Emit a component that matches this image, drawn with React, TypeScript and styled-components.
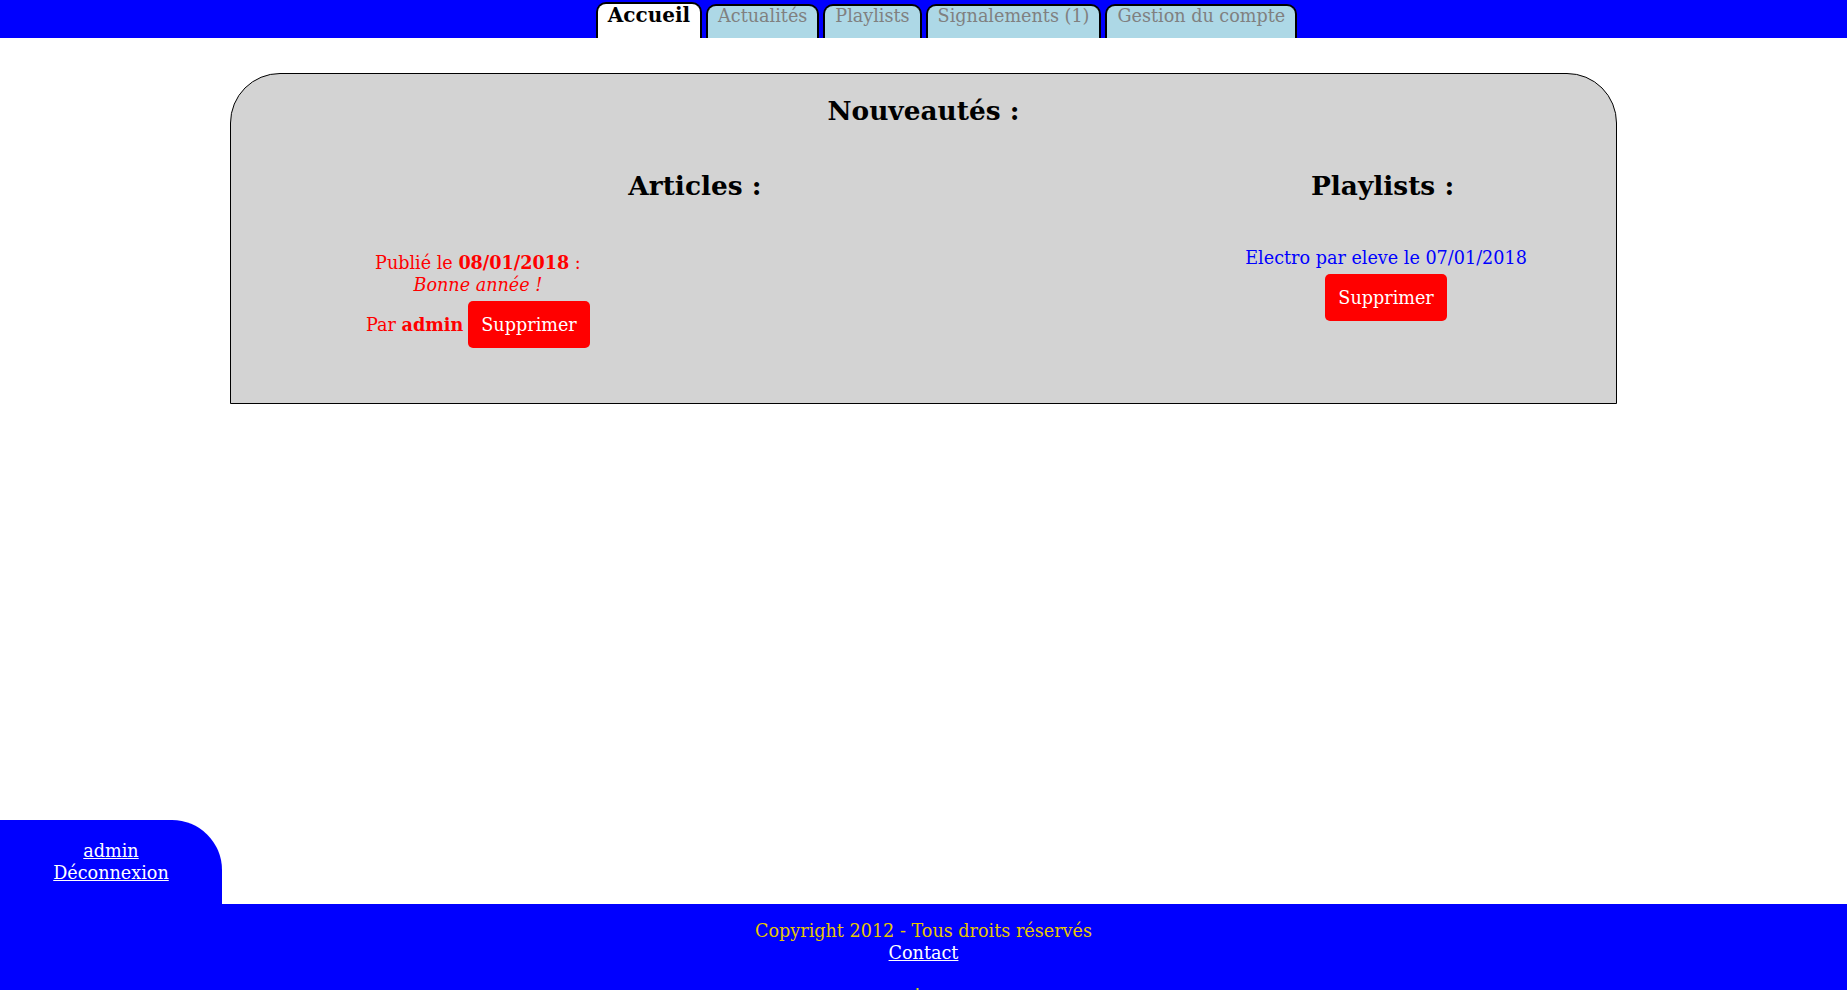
import React from "react";
import styled, { createGlobalStyle } from "styled-components";

const GlobalStyle = createGlobalStyle`
  html, body {
    margin: 0;
    padding: 0;
    background: #ffffff;
  }
  body {
    font-family: "DejaVu Serif", serif;
    font-size: 17.6px;
    color: #000000;
  }
`;

const Header = styled.nav`
  height: 38px;
  background: #0000ff;
  display: flex;
  justify-content: center;
  align-items: flex-end;
  gap: 4px;
  padding-left: 46px;
`;

const Tab = styled.a<{ $active?: boolean }>`
  box-sizing: border-box;
  display: block;
  height: ${(p) => (p.$active ? "36px" : "34px")};
  padding: 0 10px;
  border: 2px solid #000000;
  border-bottom: 0;
  border-radius: 10px 10px 0 0;
  background: ${(p) => (p.$active ? "#ffffff" : "#add8e6")};
  color: ${(p) => (p.$active ? "#000000" : "#808080")};
  font-weight: ${(p) => (p.$active ? "bold" : "normal")};
  font-size: ${(p) => (p.$active ? "20px" : "17.6px")};
  line-height: ${(p) => (p.$active ? "23px" : "20px")};
  text-decoration: none;
  cursor: pointer;
`;

const Main = styled.main`
  box-sizing: border-box;
  min-height: 782px;
  padding-top: 35px;
`;

const Panel = styled.section`
  width: 75%;
  margin: 0 auto;
  background: #d3d3d3;
  border: 1px solid #000000;
  border-radius: 50px 50px 0 0;
  padding-bottom: 55px;
`;

const Title = styled.h2`
  margin: 21px 0 0;
  font-size: 26.4px;
  line-height: 31px;
  text-align: center;
`;

const Columns = styled.div`
  display: grid;
  grid-template-columns: 67fr 33fr;
  margin-top: 44px;
`;

const Column = styled.div`
  text-align: center;
`;

const ColumnTitle = styled.h2<{ $shift?: number }>`
  margin: 0;
  padding-right: ${(p) => p.$shift ?? 0}px;
  font-size: 26.4px;
  line-height: 31px;
`;

const ArticleList = styled.div`
  margin-top: 51px;
  display: flex;
  justify-content: flex-start;
`;

const Article = styled.article`
  width: 400px;
  margin-left: 47px;
  color: #ff0000;
  line-height: 22px;
  text-align: center;
`;

const ArticleMeta = styled.p`
  margin: 0;
`;

const AuthorRow = styled.div`
  margin-top: 5px;
  display: flex;
  justify-content: center;
  align-items: center;
  gap: 5px;
`;

const PlaylistList = styled.div`
  margin-top: 46px;
  padding-right: 3px;
  display: flex;
  flex-direction: column;
  align-items: center;
`;

const PlaylistItem = styled.p`
  margin: 0;
  color: #0000ff;
  line-height: 22px;
`;

const DeleteButton = styled.button<{ $spaced?: boolean }>`
  height: 47px;
  margin-top: ${(p) => (p.$spaced ? "5px" : "0")};
  padding: 0 13px;
  border: none;
  border-radius: 5px;
  background: #ff0000;
  color: #ffffff;
  font-family: "DejaVu Serif", serif;
  font-size: 17.6px;
  cursor: pointer;
`;

const UserBox = styled.div`
  box-sizing: border-box;
  width: 222px;
  height: 84px;
  padding-top: 20px;
  background: #0000ff;
  border-top-right-radius: 50px;
  display: flex;
  flex-direction: column;
  align-items: center;
  line-height: 22px;
`;

const WhiteLink = styled.a`
  color: #ffffff;
  text-decoration: underline;
  cursor: pointer;
`;

const Footer = styled.footer`
  background: #0000ff;
  padding: 16px 0 20px;
  text-align: center;
  line-height: 22px;
`;

const Copyright = styled.div`
  color: #e6c700;
`;

const Badge = styled.div`
  margin-top: 24px;
  display: flex;
  justify-content: center;
`;

export default function App() {
  return (
    <>
      <GlobalStyle />
      <Header>
        <Tab $active>Accueil</Tab>
        <Tab>Actualités</Tab>
        <Tab>Playlists</Tab>
        <Tab>Signalements (1)</Tab>
        <Tab>Gestion du compte</Tab>
      </Header>
      <Main>
        <Panel>
          <Title>Nouveautés :</Title>
          <Columns>
            <Column>
              <ColumnTitle>Articles :</ColumnTitle>
              <ArticleList>
                <Article>
                  <ArticleMeta>
                    Publié le <b>08/01/2018</b> :
                    <br />
                    <i>Bonne année !</i>
                  </ArticleMeta>
                  <AuthorRow>
                    <span>
                      Par <b>admin</b>
                    </span>
                    <DeleteButton>Supprimer</DeleteButton>
                  </AuthorRow>
                </Article>
              </ArticleList>
            </Column>
            <Column>
              <ColumnTitle $shift={10}>Playlists :</ColumnTitle>
              <PlaylistList>
                <PlaylistItem>Electro par eleve le 07/01/2018</PlaylistItem>
                <DeleteButton $spaced>Supprimer</DeleteButton>
              </PlaylistList>
            </Column>
          </Columns>
        </Panel>
      </Main>
      <UserBox>
        <WhiteLink>admin</WhiteLink>
        <WhiteLink>Déconnexion</WhiteLink>
      </UserBox>
      <Footer>
        <Copyright>Copyright 2012 - Tous droits réservés</Copyright>
        <WhiteLink>Contact</WhiteLink>
        <Badge>
          <svg width="16" height="16" viewBox="0 0 16 16">
            <rect x="0" y="0" width="1" height="16" fill="#3a9a3a" />
            <rect x="1" y="0" width="1" height="16" fill="#d8c040" />
            <rect x="2" y="0" width="1" height="16" fill="#7a6a9a" />
          </svg>
        </Badge>
      </Footer>
    </>
  );
}
